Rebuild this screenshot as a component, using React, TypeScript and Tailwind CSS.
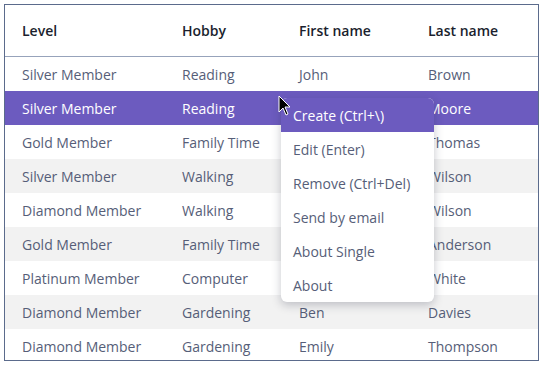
import React from 'react';

// first names under the open context menu are hidden in the shot
const rows = [
  ['Silver Member', 'Reading', 'John', 'Brown'],
  ['Silver Member', 'Reading', '', 'Moore'],
  ['Gold Member', 'Family Time', '', 'Thomas'],
  ['Silver Member', 'Walking', '', 'Wilson'],
  ['Diamond Member', 'Walking', '', 'Wilson'],
  ['Gold Member', 'Family Time', '', 'Anderson'],
  ['Platinum Member', 'Computer', '', 'White'],
  ['Diamond Member', 'Gardening', 'Ben', 'Davies'],
  ['Diamond Member', 'Gardening', 'Emily', 'Thompson'],
];

const menuItems = [
  'Create (Ctrl+\\)',
  'Edit (Enter)',
  'Remove (Ctrl+Del)',
  'Send by email',
  'About Single',
  'About',
];

const cols = 'grid grid-cols-[160px_117px_129px_1fr]';

export default function App() {
  return (
    <div
      className="relative h-[366px] w-[543px] bg-white p-1"
      style={{ fontFamily: '"Open Sans", "Liberation Sans", sans-serif' }}
    >
      <div className="h-[357px] w-[535px] overflow-hidden border border-[#5b6b8c]">
        <div className={`${cols} h-[52px] items-center border-b border-[#97a3bb] text-[14px] font-semibold text-[#1b1f2e]`}>
          <div className="pl-[17px]">Level</div>
          <div className="pl-[17px]">Hobby</div>
          <div className="pl-[17px]">First name</div>
          <div className="pl-[17px]">Last name</div>
        </div>
        {rows.map((r, i) => {
          const selected = i === 1;
          const bg = selected
            ? 'bg-[#6c5bbf] text-white'
            : i % 2 === 1
              ? 'bg-[#f2f2f2] text-[#565e78]'
              : 'bg-white text-[#565e78]';
          return (
            <div key={i} className={`${cols} h-[34px] items-center text-[14px] ${bg}`}>
              {r.map((c, j) => (
                <div key={j} className="pl-[17px] whitespace-nowrap">
                  {c}
                </div>
              ))}
            </div>
          );
        })}
      </div>

      <div className="absolute left-[281px] top-[98px] w-[153px] overflow-hidden rounded-md bg-white text-[14px] text-[#565e78] shadow-[0_3px_10px_rgba(30,35,60,0.25)]">
        {menuItems.map((m, i) => (
          <div
            key={m}
            className={`flex h-[34px] items-center px-3 whitespace-nowrap ${i === 0 ? 'bg-[#6c5bbf] text-white' : ''}`}
          >
            {m}
          </div>
        ))}
      </div>

      <svg className="absolute left-[278px] top-[95px]" width="14" height="22" viewBox="0 0 14 22">
        <path d="M1 1 L1 17 L5 13 L8 20 L10 19 L7 12 L12 12 Z" fill="#000" stroke="#fff" strokeWidth="1" strokeLinejoin="round" />
      </svg>
    </div>
  );
}
